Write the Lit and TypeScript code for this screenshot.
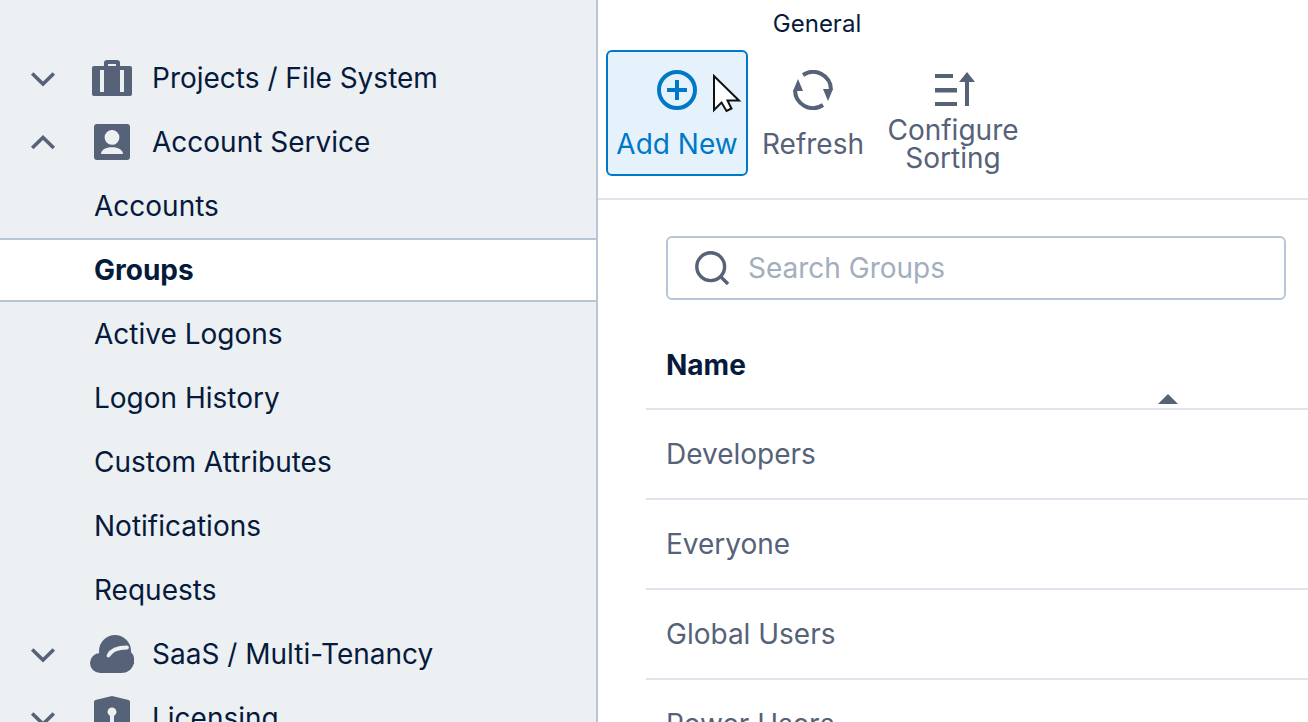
import { LitElement, css, html, svg } from 'lit';
import { customElement } from 'lit/decorators.js';

const down = svg`<path d="M2.200 6.500L13 17L23.800 6.500" fill="none" stroke="currentColor" stroke-width="3.600"/>`;
const up = svg`<path d="M2.200 17L13 6.500L23.800 17" fill="none" stroke="currentColor" stroke-width="3.600"/>`;

const briefcase = svg`<svg width="40" height="36" viewBox="0 0 40 36" fill="currentColor">
  <path fill-rule="evenodd" d="M12 6V3a3 3 0 0 1 3-3h10a3 3 0 0 1 3 3v3h10a2 2 0 0 1 2 2v26a2 2 0 0 1-2 2H2a2 2 0 0 1-2-2V8a2 2 0 0 1 2-2zM16 4v2h8V4zM8 10v22h4V10zM28 10v22h4V10z"/>
</svg>`;
const person = svg`<svg width="36" height="36" viewBox="0 0 36 36" fill="currentColor">
  <path fill-rule="evenodd" d="M3 0h30a3 3 0 0 1 3 3v30a3 3 0 0 1-3 3H3a3 3 0 0 1-3-3V3a3 3 0 0 1 3-3zM18 6a7.400 7.400 0 1 0 0 14.800 7.400 7.400 0 0 0 0-14.800zM7 30h22c0-4-5-6.700-11-6.700S7 26 7 30z"/>
</svg>`;
const cloud = svg`<svg width="44" height="38" viewBox="0 0 44 38" fill="currentColor">
  <circle cx="25" cy="16" r="16"/>
  <circle cx="10" cy="28" r="10"/>
  <circle cx="32" cy="25.500" r="12.300"/>
  <rect x="10" y="24" width="22" height="14"/>
  <path d="M18.500 20.500C21 15.500 26 12.500 37 12.500" fill="none" stroke="#ecf0f3" stroke-width="3.800" stroke-linecap="round"/>
</svg>`;
const shield = svg`<svg width="36" height="44" viewBox="0 0 36 44" fill="currentColor">
  <path fill-rule="evenodd" d="M0 6a2 2 0 0 1 1.500-2L18 0l16.500 4A2 2 0 0 1 36 6V44H0zM18 11.500a4.500 4.500 0 0 0-2 8.500V36h4V20a4.500 4.500 0 0 0-2-8.500z"/>
</svg>`;

@customElement('app-root')
export class AppRoot extends LitElement {
  static override styles = css`
    :host {
      display: flex;
      width: 1308px;
      height: 722px;
      overflow: hidden;
      background: #fff;
      font-family: Inter, 'Liberation Sans', sans-serif;
      font-size: 28px;
      color: #061a3c;
    }
    .side {
      width: 598px;
      height: 722px;
      flex: none;
      box-sizing: border-box;
      padding-top: 46px;
      overflow: hidden;
      background: #ecf0f3;
      border-right: 2px solid #b7c5d6;
      position: relative;
    }
    .row {
      height: 64px;
      display: flex;
      align-items: center;
      line-height: 1;
    }
    .row.sub { padding-left: 94px; }
    .row.on {
      box-sizing: border-box;
      position: relative;
      background: #fff;
      border-top: 2px solid #b7c5d6;
      border-bottom: 2px solid #b7c5d6;
      font-weight: 700;
      margin-right: -2px;
    }
    .chev {
      width: 28px;
      height: 23px;
      margin-left: 30px;
      flex: none;
      color: #566278;
    }
    .ico {
      width: 44px;
      margin-left: 32px;
      margin-right: 18px;
      flex: none;
      display: flex;
      justify-content: center;
      color: #566278;
    }
    .main {
      flex: 1;
      min-width: 0;
      position: relative;
    }
    .bar {
      box-sizing: border-box;
      border-bottom: 2px solid #dfe3ec;
      height: 200px;
      padding-top: 11px;
    }
    .group {
      width: 422px;
      margin-left: 8px;
    }
    .group-title {
      font-size: 24px;
      line-height: 26px;
      text-align: center;
      height: 39px;
    }
    .btns { display: flex; align-items: flex-start; }
    .btn {
      box-sizing: border-box;
      height: 126px;
      width: 142px;
      display: flex;
      flex-direction: column;
      align-items: center;
      padding-top: 18px;
      color: #566278;
      line-height: 28px;
      text-align: center;
      border: 2px solid transparent;
      border-radius: 6px;
    }
    .btn svg { flex: none; margin-bottom: 20px; }
    .btn.hot {
      color: #0078c8;
      background: #e6f2fb;
      border-color: #0078c8;
    }
    .btn.r { width: 130px; }
    .btn.c { width: 150px; padding-top: 20px; }
    .btn.c svg { margin: 0 0 10px 3px; }
    .cursor {
      position: absolute;
      left: 114px;
      top: 74px;
    }
    .body { padding: 36px 22px 0 48px; }
    .search {
      box-sizing: border-box;
      height: 64px;
      margin-left: 20px;
      display: flex;
      align-items: center;
      gap: 19px;
      padding-left: 27px;
      border: 2px solid #b7c5d6;
      border-radius: 6px;
      color: #a3aebd;
    }
    .table { margin-right: -22px; }
    .head {
      position: relative;
      height: 110px;
      box-sizing: border-box;
      padding: 48px 0 0 20px;
      border-bottom: 2px solid #dfe3ec;
      font-weight: 700;
      line-height: 34px;
    }
    .caret {
      position: absolute;
      left: 512px;
      bottom: 4px;
      width: 0;
      height: 0;
      border-left: 10px solid transparent;
      border-right: 10px solid transparent;
      border-bottom: 10px solid #566278;
    }
    .item {
      box-sizing: border-box;
      height: 90px;
      display: flex;
      align-items: center;
      padding-left: 20px;
      border-bottom: 2px solid #dfe3ec;
      color: #566278;
    }
  `;

  private tree(open: boolean, icon: unknown, label: string) {
    return html`<div class="row">
      <svg class="chev" viewBox="0 0 28 23">${open ? up : down}</svg>
      <span class="ico">${icon}</span>
      <span>${label}</span>
    </div>`;
  }

  override render() {
    const subs = ['Active Logons', 'Logon History', 'Custom Attributes', 'Notifications', 'Requests'];
    const rows = ['Developers', 'Everyone', 'Global Users', 'Power Users'];
    return html`
      <nav class="side">
        ${this.tree(false, briefcase, 'Projects / File System')}
        ${this.tree(true, person, 'Account Service')}
        <div class="row sub">Accounts</div>
        <div class="row sub on">Groups</div>
        ${subs.map((s) => html`<div class="row sub">${s}</div>`)}
        ${this.tree(false, cloud, 'SaaS / Multi-Tenancy')}
        ${this.tree(false, shield, 'Licensing')}
      </nav>
      <main class="main">
        <div class="bar">
          <div class="group">
            <div class="group-title">General</div>
            <div class="btns">
              <div class="btn hot">
                <svg width="40" height="40" viewBox="0 0 40 40" fill="none" stroke="currentColor">
                  <circle cx="20" cy="20" r="18" stroke-width="4"/>
                  <path d="M20 10v20M10 20h20" stroke-width="4"/>
                </svg>
                Add New
              </div>
              <div class="btn r">
                <svg width="40" height="40" viewBox="0 0 40 40" fill="none">
                  <path d="M10 5A18 18 0 0 1 38 20M2 20A18 18 0 0 0 30 35" stroke="#566278" stroke-width="4"/>
                  <path d="M5 9L0 21H10Z M35 31L30 19H40Z" fill="#566278"/>
                </svg>
                Refresh
              </div>
              <div class="btn c">
                <svg width="40" height="34" viewBox="0 0 40 34" fill="#566278">
                  <path d="M0 2h18v4H0zM0 16h22v4.500H0zM0 30h22v4H0z"/>
                  <path d="M30 34V10h-6L32 0l8 10h-6v24z"/>
                </svg>
                <span>Configure<br />Sorting</span>
              </div>
            </div>
          </div>
        </div>
        <svg class="cursor" width="30" height="40" viewBox="0 0 30 40">
          <path d="M2 2V36L9.500 28.500L14.500 37L19.500 34.500L15.500 26.500H27Z" fill="#fff" stroke="#111" stroke-width="2"/>
        </svg>
        <div class="body">
          <div class="search">
            <svg width="34" height="34" viewBox="0 0 34 34" fill="none" stroke="#566278" stroke-width="3.400">
              <circle cx="15.700" cy="15.700" r="13.900"/>
              <path d="M25.500 25.500L33 33"/>
            </svg>
            Search Groups
          </div>
          <div class="table">
            <div class="head">Name<span class="caret"></span></div>
            ${rows.map((r) => html`<div class="item">${r}</div>`)}
          </div>
        </div>
      </main>
    `;
  }
}
